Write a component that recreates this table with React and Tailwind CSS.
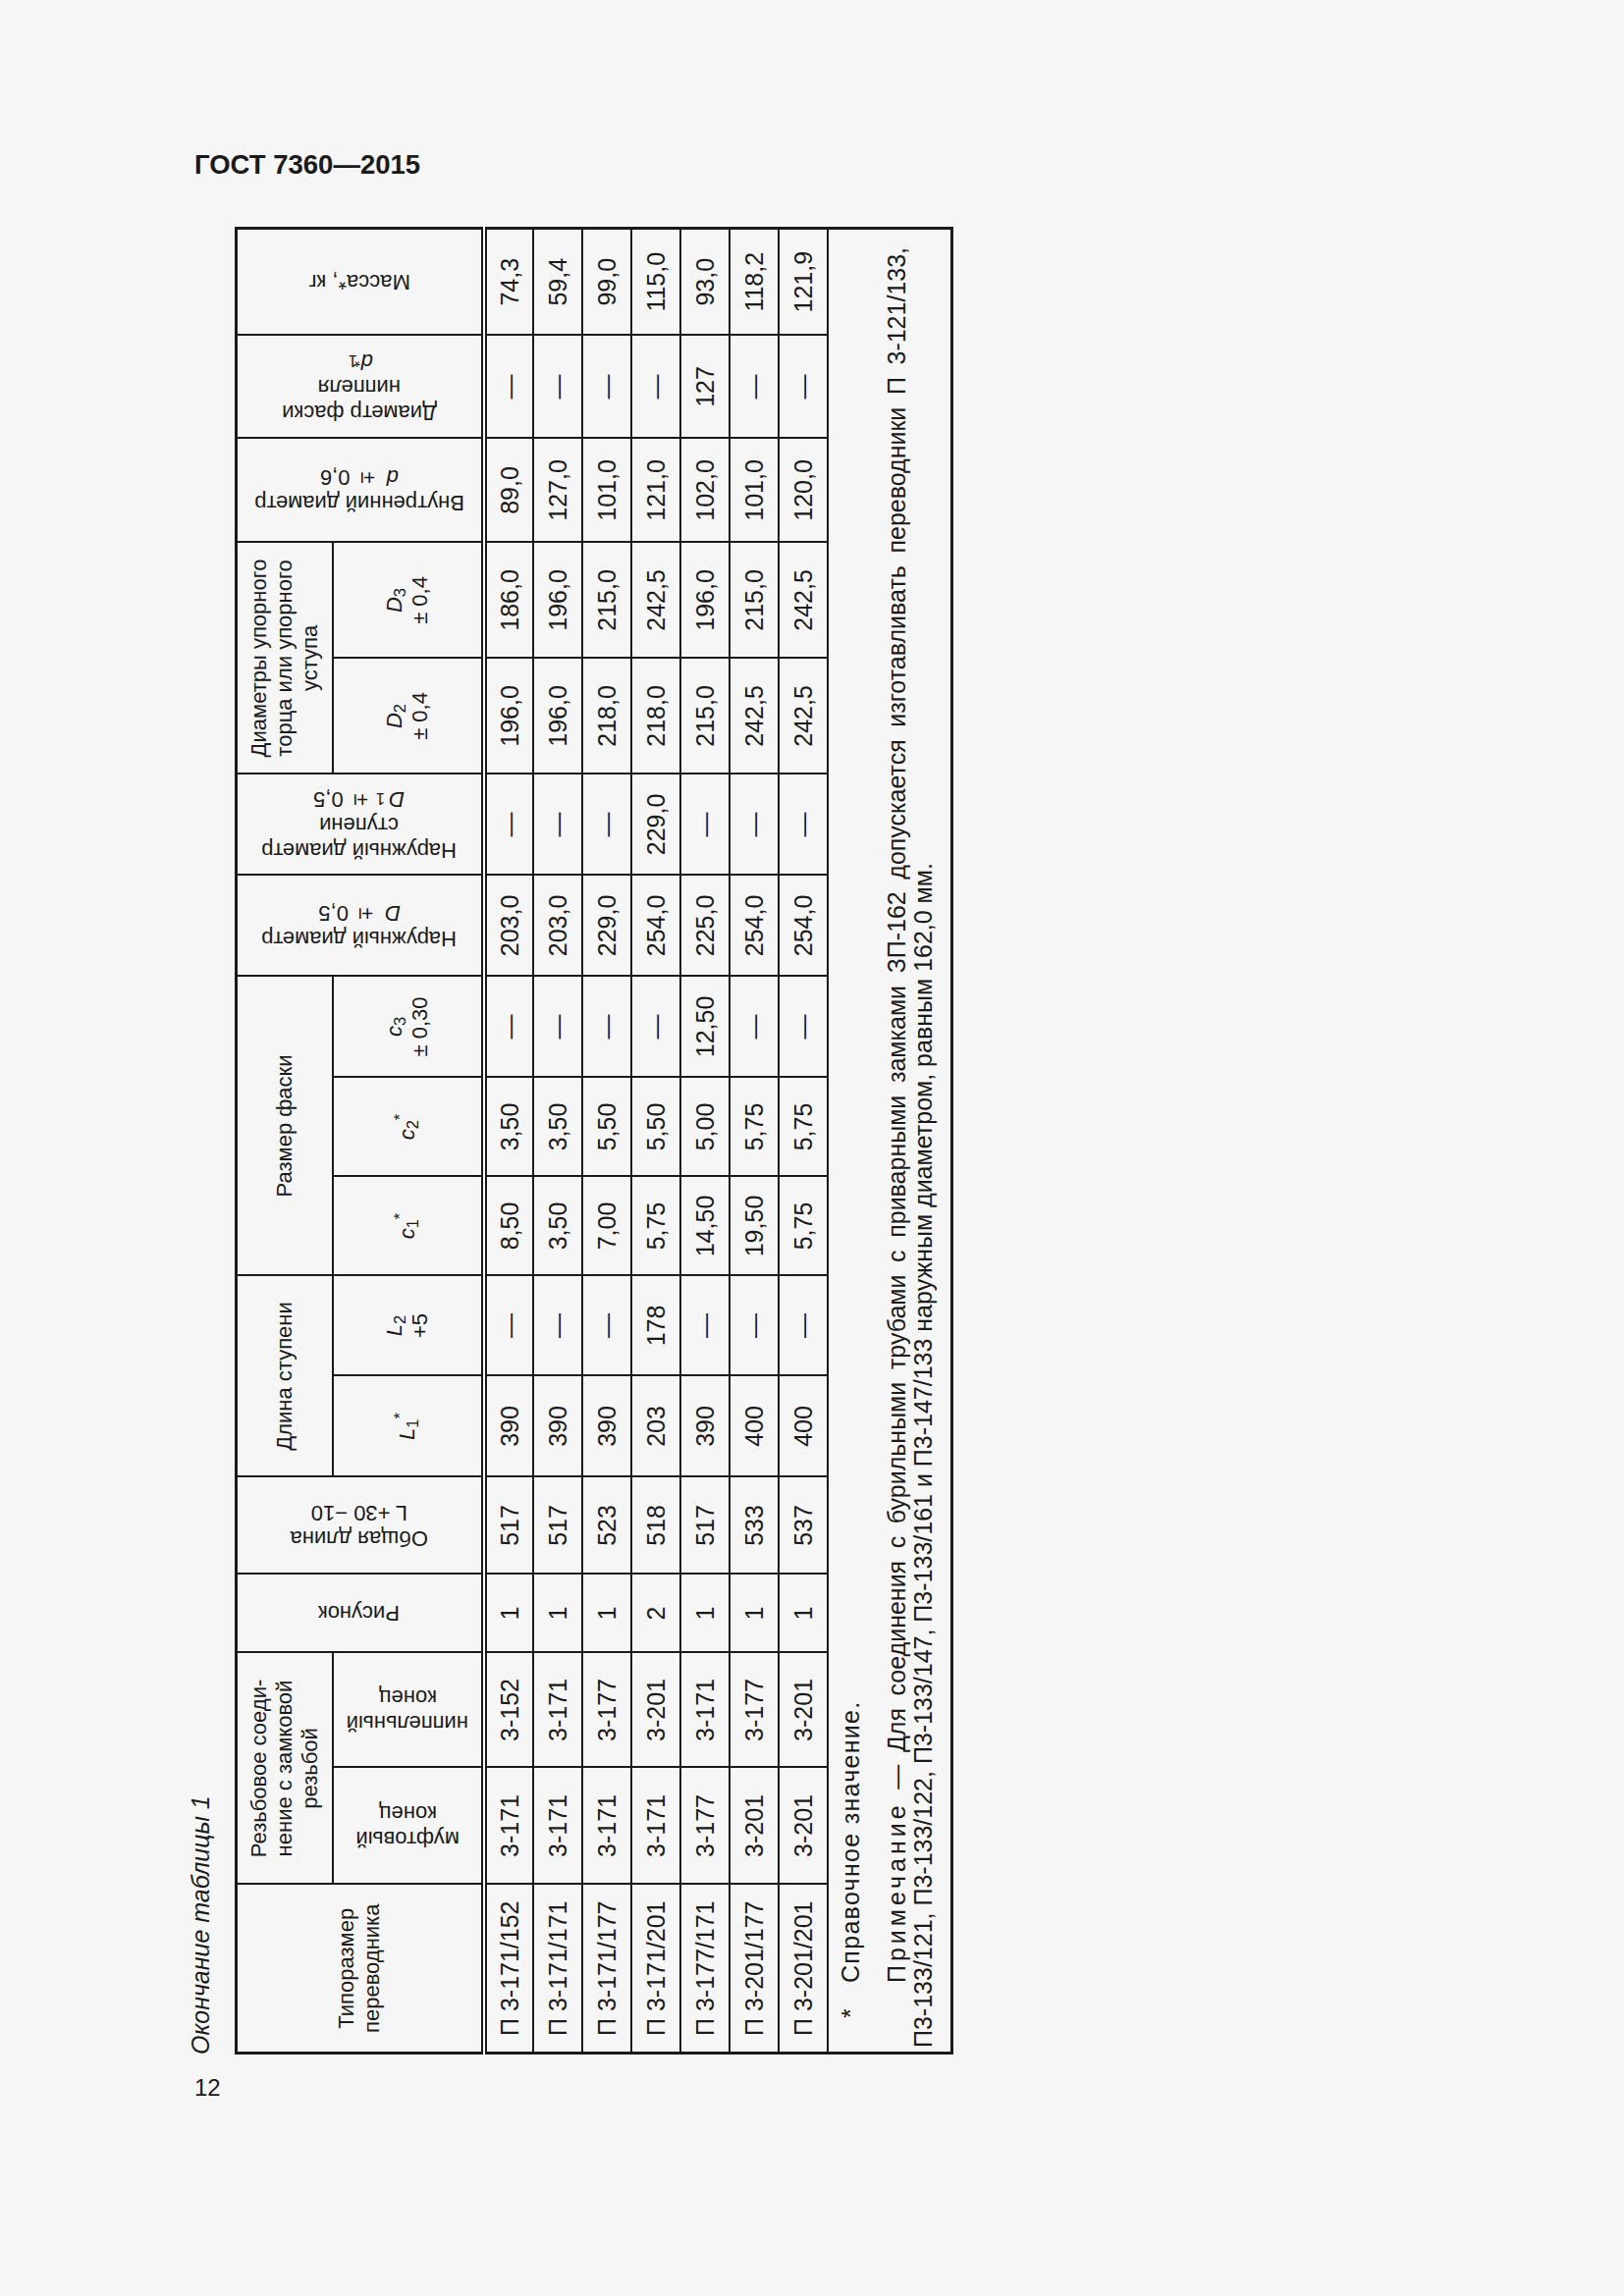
const rows = [
  ['П 3-171/152', '3-171', '3-152', '1', '517', '390', '—', '8,50', '3,50', '—', '203,0', '—', '196,0', '186,0', '89,0', '—', '74,3'],
  ['П 3-171/171', '3-171', '3-171', '1', '517', '390', '—', '3,50', '3,50', '—', '203,0', '—', '196,0', '196,0', '127,0', '—', '59,4'],
  ['П 3-171/177', '3-171', '3-177', '1', '523', '390', '—', '7,00', '5,50', '—', '229,0', '—', '218,0', '215,0', '101,0', '—', '99,0'],
  ['П 3-171/201', '3-171', '3-201', '2', '518', '203', '178', '5,75', '5,50', '—', '254,0', '229,0', '218,0', '242,5', '121,0', '—', '115,0'],
  ['П 3-177/171', '3-177', '3-171', '1', '517', '390', '—', '14,50', '5,00', '12,50', '225,0', '—', '215,0', '196,0', '102,0', '127', '93,0'],
  ['П 3-201/177', '3-201', '3-177', '1', '533', '400', '—', '19,50', '5,75', '—', '254,0', '—', '242,5', '215,0', '101,0', '—', '118,2'],
  ['П 3-201/201', '3-201', '3-201', '1', '537', '400', '—', '5,75', '5,75', '—', '254,0', '—', '242,5', '242,5', '120,0', '—', '121,9'],
]

const cell = 'border-2 border-[#1a1a1a] p-0 text-center align-middle'

// text that reads bottom-to-top inside the (unrotated) table
function Vert({ h, children }) {
  return (
    <div className={`inline-block ${h} rotate-180 text-center align-middle [writing-mode:vertical-rl]`}>
      {children}
    </div>
  )
}

export default function App() {
  return (
    <div className="min-h-[2339px] w-[1654px] bg-[#f6f6f6] font-['Liberation_Sans',Arial,sans-serif] text-[#1a1a1a]">
      <div className="pl-[198px] pt-[152px] text-[27.5px] font-bold leading-[32px]">ГОСТ 7360—2015</div>

      {/* the table is printed sideways on the page */}
      <div className="ml-[189px] mt-[47px] h-[1865px] w-[782px] overflow-hidden">
        <div className="h-[782px] w-[1865px] origin-top-left translate-y-[1865px] -rotate-90 px-[3px]">
          <div className="mb-[20px] h-[30px] text-[25px] italic leading-[30px]">Окончание таблицы 1</div>

          <table className="w-[1859px] table-fixed border-collapse border-[3px] border-[#1a1a1a]">
            <colgroup>
              <col className="w-[172px]" />
              <col className="w-[119px]" />
              <col className="w-[117px]" />
              <col className="w-[80px]" />
              <col className="w-[99px]" />
              <col className="w-[103px]" />
              <col className="w-[102px]" />
              <col className="w-[101px]" />
              <col className="w-[101px]" />
              <col className="w-[103px]" />
              <col className="w-[103px]" />
              <col className="w-[103px]" />
              <col className="w-[118px]" />
              <col className="w-[118px]" />
              <col className="w-[106px]" />
              <col className="w-[105px]" />
              <col className="w-[109px]" />
            </colgroup>
            <thead className="text-[22px] leading-[26px] font-normal">
              <tr className="h-[98px]">
                <th rowSpan={2} className={`${cell} font-normal`}>
                  Типоразмер<br />переводника
                </th>
                <th colSpan={2} className={`${cell} font-normal`}>
                  Резьбовое соеди-<br />нение с замковой<br />резьбой
                </th>
                <th rowSpan={2} className={`${cell} font-normal`}>
                  <Vert h="h-[240px]">Рисунок</Vert>
                </th>
                <th rowSpan={2} className={`${cell} font-normal`}>
                  <Vert h="h-[240px]">Общая длина<br />L +30 −10</Vert>
                </th>
                <th colSpan={2} className={`${cell} font-normal`}>Длина ступени</th>
                <th colSpan={3} className={`${cell} font-normal`}>Размер фаски</th>
                <th rowSpan={2} className={`${cell} font-normal`}>
                  <Vert h="h-[240px]">Наружный диаметр<br /><i>D</i> ± 0,5</Vert>
                </th>
                <th rowSpan={2} className={`${cell} font-normal`}>
                  <Vert h="h-[240px]">Наружный диаметр<br />ступени<br /><i>D</i><sub>1</sub> ± 0,5</Vert>
                </th>
                <th colSpan={2} className={`${cell} font-normal`}>
                  Диаметры упорного<br />торца или упорного<br />уступа
                </th>
                <th rowSpan={2} className={`${cell} font-normal`}>
                  <Vert h="h-[240px]">Внутренний диаметр<br /><i>d</i> ± 0,6</Vert>
                </th>
                <th rowSpan={2} className={`${cell} font-normal`}>
                  <Vert h="h-[240px]">Диаметр фаски<br />ниппеля<br /><i>d</i><sub>1</sub><sup>*</sup></Vert>
                </th>
                <th rowSpan={2} className={`${cell} font-normal`}>
                  <Vert h="h-[240px]">Масса*, кг</Vert>
                </th>
              </tr>
              <tr className="h-[154px]">
                <th className={`${cell} font-normal`}>
                  <Vert h="h-[146px]">муфтовый<br />конец</Vert>
                </th>
                <th className={`${cell} font-normal`}>
                  <Vert h="h-[146px]">ниппельный<br />конец</Vert>
                </th>
                <th className={`${cell} font-normal`}>
                  <i>L</i><sub>1</sub><sup>*</sup>
                </th>
                <th className={`${cell} font-normal`}>
                  <i>L</i><sub>2</sub><br />+5
                </th>
                <th className={`${cell} font-normal`}>
                  <i>c</i><sub>1</sub><sup>*</sup>
                </th>
                <th className={`${cell} font-normal`}>
                  <i>c</i><sub>2</sub><sup>*</sup>
                </th>
                <th className={`${cell} font-normal`}>
                  <i>c</i><sub>3</sub><br />± 0,30
                </th>
                <th className={`${cell} font-normal`}>
                  <i>D</i><sub>2</sub><br />± 0,4
                </th>
                <th className={`${cell} font-normal`}>
                  <i>D</i><sub>3</sub><br />± 0,4
                </th>
              </tr>
            </thead>
            <tbody className="text-[25px] leading-[30px]">
              {rows.map((row, i) => (
                <tr key={row[0]} className="h-[50px]">
                  {row.map((val, j) => (
                    <td
                      key={j}
                      className={`${cell} ${i === 0 ? 'border-t-[6px] border-t-[#1a1a1a] border-double' : ''}`}
                    >
                      {val}
                    </td>
                  ))}
                </tr>
              ))}
              <tr>
                <td colSpan={17} className="h-[124px] border-2 border-[#1a1a1a] pl-[4px] pr-[10px] pt-[9px] pb-[14px] text-left align-top text-[25px] leading-[27px]">
                  <div className="tracking-[1.3px]">
                    <span className="inline-block w-[66px] pl-[30px]">*</span>Справочное значение.
                  </div>
                  <div className="mt-[20px] pr-[8px] pl-[66px] text-justify [text-align-last:justify]">
                    <span className="tracking-[4px]">Примечание</span> — Для соединения с бурильными трубами с приварными замками ЗП-162 допускается изготавливать переводники П 3-121/133,
                  </div>
                  <div>
                    П3-133/121, П3-133/122, П3-133/147, П3-133/161 и П3-147/133 наружным диаметром, равным 162,0 мм.
                  </div>
                </td>
              </tr>
            </tbody>
          </table>
        </div>
      </div>

      <div className="mt-[17px] pl-[198px] text-[24px] leading-[28px]">12</div>
    </div>
  )
}
